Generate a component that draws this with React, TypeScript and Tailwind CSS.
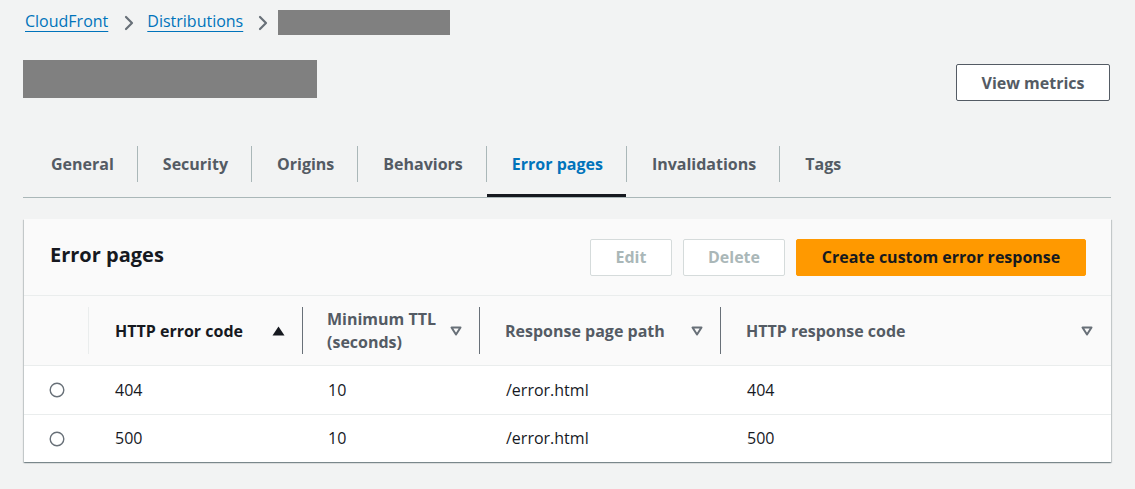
import React from "react";

const Chevron = () => (
  <svg width="12" height="16" viewBox="0 0 12 16" className="shrink-0">
    <path d="M3 2 L9 8 L3 14" fill="none" stroke="#687078" strokeWidth="2.2" strokeLinecap="round" strokeLinejoin="round" />
  </svg>
);

const SortDown = () => (
  <svg width="12" height="10" viewBox="0 0 12 10">
    <path d="M1.5 1.5 L10.5 1.5 L6 8.5 Z" fill="none" stroke="#687078" strokeWidth="2" strokeLinejoin="round" />
  </svg>
);

const SortUpFilled = () => (
  <svg width="13" height="10" viewBox="0 0 13 10">
    <path d="M6.5 0.5 L12.5 9.5 L0.5 9.5 Z" fill="#16191f" />
  </svg>
);

const Radio = () => (
  <svg width="16" height="16" viewBox="0 0 16 16">
    <circle cx="8" cy="8" r="6.8" fill="#fff" stroke="#687078" strokeWidth="1.4" />
  </svg>
);

const tabs = ["General", "Security", "Origins", "Behaviors", "Error pages", "Invalidations", "Tags"];

export default function App() {
  const rows = [
    ["404", "10", "/error.html", "404"],
    ["500", "10", "/error.html", "500"],
  ];
  return (
    <div
      className="w-[1135px] h-[489px] bg-[#f2f3f3] text-[#16191f] overflow-hidden"
      style={{ fontFamily: '"Open Sans", "Liberation Sans", Arial, sans-serif' }}
    >
      <div className="pl-[23px] pr-[24px]">
        {/* Breadcrumb */}
        <div className="pt-[10px] h-[35px] flex items-center text-[16px]">
          <a className="text-[#0073bb] underline underline-offset-[4px] decoration-1 ml-[2px] -translate-y-[2px]">CloudFront</a>
          <span className="ml-[15px] mr-[12px] flex"><Chevron /></span>
          <a className="text-[#0073bb] underline underline-offset-[4px] decoration-1 -translate-y-[2px]">Distributions</a>
          <span className="ml-[14px] mr-[9px] flex"><Chevron /></span>
          <div className="w-[172px] h-[25px] bg-[#808080]" />
        </div>

        {/* Header */}
        <div className="mt-[25px] flex justify-between items-start">
          <div className="w-[294px] h-[38px] bg-[#808080]" />
          <button className="mt-[4px] w-[154px] h-[37px] bg-white border border-[#545b64] rounded-[2px] text-[#545b64] font-bold text-[16px] mr-[1px]">
            View metrics
          </button>
        </div>

        {/* Tabs */}
        <div className="mt-[39px] flex border-b border-[#aab7b8]">
          {tabs.map((t, i) => {
            const active = t === "Error pages";
            return (
              <div key={t} className="relative pt-[6px] pb-[15px]">
                <div
                  className={
                    "h-[36px] flex items-center font-bold text-[16px] " +
                    (i === 0 ? "pl-[28px] pr-[23px] " : "border-l border-[#aab7b8] pl-[25px] pr-[23px] ") +
                    (active ? "text-[#0073bb]" : "text-[#545b64]")
                  }
                >
                  {t}
                </div>
                {active && <div className="absolute left-[1px] right-0 bottom-0 h-[3px] bg-[#16191f]" />}
              </div>
            );
          })}
        </div>

        {/* Card */}
        <div className="mt-[21px] ml-[1px] bg-white shadow-[0_1px_1px_0_rgba(0,28,36,0.3),1px_1px_1px_0_rgba(0,28,36,0.15),-1px_1px_1px_0_rgba(0,28,36,0.15)]">
          <div className="h-[77px] bg-[#fafafa] border-b border-[#eaeded] flex items-center justify-between pl-[26px] pr-[25px]">
            <h2 className="text-[20px] font-bold text-[#16191f] -mt-[4px]">Error pages</h2>
            <div className="flex gap-[11px]">
              <button className="w-[82px] h-[37px] bg-white border border-[#d5dbdb] rounded-[2px] text-[#aab7b8] font-bold text-[16px]">
                Edit
              </button>
              <button className="w-[102px] h-[37px] bg-white border border-[#d5dbdb] rounded-[2px] text-[#aab7b8] font-bold text-[16px]">
                Delete
              </button>
              <button className="w-[290px] h-[37px] bg-[#ff9900] border border-[#ff9900] rounded-[2px] text-[#16191f] font-bold text-[16px]">
                Create custom error response
              </button>
            </div>
          </div>

          {/* Table header */}
          <div className="grid grid-cols-[65px_214px_177px_241px_1fr] h-[70px] bg-[#fafafa] border-b border-[#eaeded] text-[16px] font-bold">
            <div className="flex items-center justify-end">
              <div className="h-[47px] border-r border-[#eaeded]" />
            </div>
            <div className="flex items-center justify-between pl-[26px] pr-[17px] border-r border-[#687078] my-[11px] text-[#16191f]">
              <span>HTTP error code</span>
              <SortUpFilled />
            </div>
            <div className="flex items-center justify-between pl-[24px] pr-[17px] border-r border-[#687078] my-[11px] text-[#545b64]">
              <span className="leading-[23px] w-[112px]">Minimum TTL (seconds)</span>
              <SortDown />
            </div>
            <div className="flex items-center justify-between pl-[25px] pr-[17px] border-r border-[#687078] my-[11px] text-[#545b64]">
              <span>Response page path</span>
              <SortDown />
            </div>
            <div className="flex items-center justify-between pl-[25px] pr-[18px] text-[#545b64]">
              <span>HTTP response code</span>
              <SortDown />
            </div>
          </div>

          {/* Rows */}
          {rows.map((r, idx) => (
            <div
              key={idx}
              className={
                "grid grid-cols-[65px_214px_177px_241px_1fr] h-[48px] items-center text-[16px] text-[#16191f] " +
                (idx > 0 ? "border-t border-[#eaeded]" : "")
              }
            >
              <div className="flex justify-center">
                <Radio />
              </div>
              <div className="pl-[26px] -mt-[1px]">{r[0]}</div>
              <div className="pl-[25px] -mt-[1px]">{r[1]}</div>
              <div className="pl-[26px] -mt-[1px]">{r[2]}</div>
              <div className="pl-[26px] -mt-[1px]">{r[3]}</div>
            </div>
          ))}
        </div>
      </div>
    </div>
  );
}
